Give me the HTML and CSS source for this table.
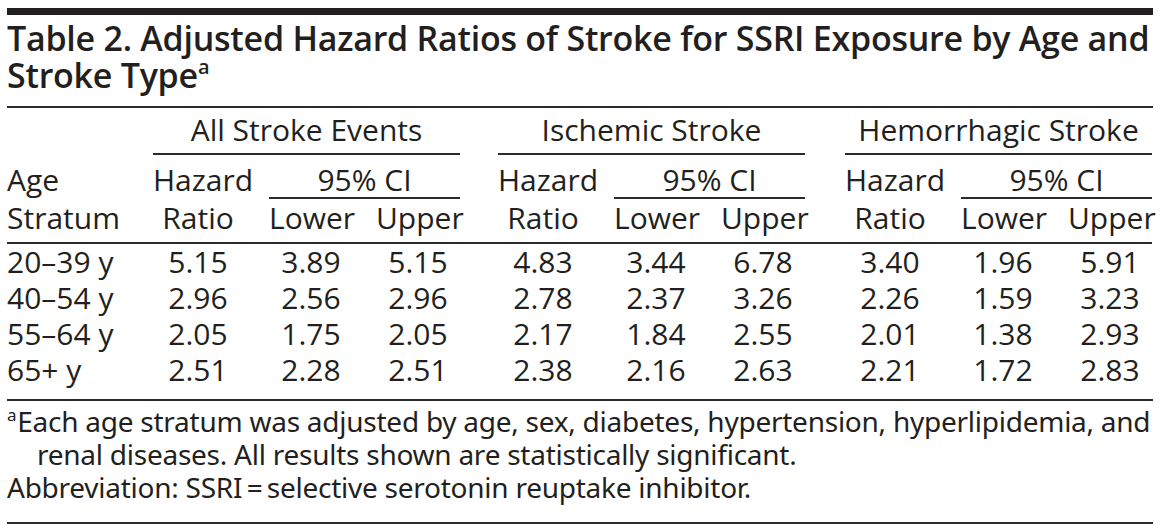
FILE: index.html
```html
<!DOCTYPE html>
<html lang="en">
<head>
<meta charset="utf-8">
<title>Table 2</title>
<link rel="stylesheet" href="styles.css">
</head>
<body>
<div class="page">
  <div class="topbar"></div>
  <h1 class="title">Table 2. Adjusted Hazard Ratios of Stroke for SSRI Exposure by Age and<br>Stroke Type<sup>a</sup></h1>
  <div class="rule"></div>
  <div class="tbl">
    <div class="grp g1">All Stroke Events</div>
    <div class="grp g2">Ischemic Stroke</div>
    <div class="grp g3">Hemorrhagic Stroke</div>

    <div class="h2 c-age">Age</div>
    <div class="h2 c-hr1">Hazard</div>
    <div class="h2 ci ci1">95% CI</div>
    <div class="h2 c-hr2">Hazard</div>
    <div class="h2 ci ci2">95% CI</div>
    <div class="h2 c-hr3">Hazard</div>
    <div class="h2 ci ci3">95% CI</div>

    <div class="h3 c-age">Stratum</div>
    <div class="h3 c-hr1">Ratio</div>
    <div class="h3 c-lo1">Lower</div>
    <div class="h3 c-up1">Upper</div>
    <div class="h3 c-hr2">Ratio</div>
    <div class="h3 c-lo2">Lower</div>
    <div class="h3 c-up2">Upper</div>
    <div class="h3 c-hr3">Ratio</div>
    <div class="h3 c-lo3">Lower</div>
    <div class="h3 c-up3">Upper</div>

    <div class="sep"></div>

    <div class="d r1 c-age">20–39 y</div>
    <div class="d r1 c-hr1">5.15</div><div class="d r1 c-lo1">3.89</div><div class="d r1 c-up1">5.15</div>
    <div class="d r1 c-hr2">4.83</div><div class="d r1 c-lo2">3.44</div><div class="d r1 c-up2">6.78</div>
    <div class="d r1 c-hr3">3.40</div><div class="d r1 c-lo3">1.96</div><div class="d r1 c-up3">5.91</div>

    <div class="d r2 c-age">40–54 y</div>
    <div class="d r2 c-hr1">2.96</div><div class="d r2 c-lo1">2.56</div><div class="d r2 c-up1">2.96</div>
    <div class="d r2 c-hr2">2.78</div><div class="d r2 c-lo2">2.37</div><div class="d r2 c-up2">3.26</div>
    <div class="d r2 c-hr3">2.26</div><div class="d r2 c-lo3">1.59</div><div class="d r2 c-up3">3.23</div>

    <div class="d r3 c-age">55–64 y</div>
    <div class="d r3 c-hr1">2.05</div><div class="d r3 c-lo1">1.75</div><div class="d r3 c-up1">2.05</div>
    <div class="d r3 c-hr2">2.17</div><div class="d r3 c-lo2">1.84</div><div class="d r3 c-up2">2.55</div>
    <div class="d r3 c-hr3">2.01</div><div class="d r3 c-lo3">1.38</div><div class="d r3 c-up3">2.93</div>

    <div class="d r4 c-age">65+ y</div>
    <div class="d r4 c-hr1">2.51</div><div class="d r4 c-lo1">2.28</div><div class="d r4 c-up1">2.51</div>
    <div class="d r4 c-hr2">2.38</div><div class="d r4 c-lo2">2.16</div><div class="d r4 c-up2">2.63</div>
    <div class="d r4 c-hr3">2.21</div><div class="d r4 c-lo3">1.72</div><div class="d r4 c-up3">2.83</div>
  </div>
  <div class="rule"></div>
  <div class="notes">
    <p class="note hang"><sup>a</sup>Each age stratum was adjusted by age, sex, diabetes, hypertension, hyperlipidemia, and<br>renal diseases. All results shown are statistically significant.</p>
    <p class="note">Abbreviation: SSRI&thinsp;=&thinsp;selective serotonin reuptake inhibitor.</p>
  </div>
  <div class="rule"></div>
</div>
</body>
</html>
```

FILE: styles.css
```css
html, body {
  margin: 0;
  padding: 0;
  background: #ffffff;
}

.page {
  width: 1146px;
  margin: 0 7px;
  color: #231f20;
  font-family: "Open Sans", "Noto Sans", sans-serif;
}

.topbar {
  margin-top: 8px;
  height: 7px;
  background: #231f20;
}

.title {
  margin: 5px 0 12px 0;
  font-size: 34px;
  line-height: 37px;
  font-weight: 600;
  letter-spacing: -0.25px;
  white-space: nowrap;
}

.title sup {
  font-size: 20px;
  vertical-align: 14px;
  line-height: 0;
}

.rule {
  height: 2px;
  background: #2b2b2b;
}

.tbl {
  display: grid;
  grid-template-columns: 146px 90px 26px 84px 23px 84px 38px 90px 26px 84px 23px 84px 40px 90px 26px 84px 23px 84px;
  font-size: 30px;
}

.tbl > div {
  white-space: nowrap;
  text-align: center;
}

.grp {
  grid-row: 1;
  line-height: 34px;
  padding: 5px 0 6px 0;
  border-bottom: 2px solid #2b2b2b;
}
.g1 { grid-column: 2 / 7; }
.g2 { grid-column: 8 / 13; }
.g3 { grid-column: 14 / 19; }

.h2 {
  grid-row: 2;
  line-height: 34px;
  padding-top: 8px;
}
.ci {
  border-bottom: 2px solid #2b2b2b;
}
.ci1 { grid-column: 4 / 7; }
.ci2 { grid-column: 10 / 13; }
.ci3 { grid-column: 16 / 19; }

.h3 {
  grid-row: 3;
  line-height: 34px;
  padding: 2px 0 7px 0;
}

.sep {
  grid-row: 4;
  grid-column: 1 / -1;
  height: 2px;
  background: #2b2b2b;
}

.d {
  line-height: 36px;
}
.r1 { grid-row: 5; }
.r2 { grid-row: 6; }
.r3 { grid-row: 7; }
.r4 { grid-row: 8; padding-bottom: 11px; }

.tbl > .c-age { grid-column: 1; text-align: left; }
.c-hr1 { grid-column: 2; }
.c-lo1 { grid-column: 4; }
.c-up1 { grid-column: 6; }
.c-hr2 { grid-column: 8; }
.c-lo2 { grid-column: 10; }
.c-up2 { grid-column: 12; }
.c-hr3 { grid-column: 14; }
.c-lo3 { grid-column: 16; }
.c-up3 { grid-column: 18; }

.notes {
  padding: 4px 0 18px 0;
  font-family: "Noto Sans", "Open Sans", sans-serif;
  font-size: 28px;
  line-height: 33px;
  letter-spacing: -0.25px;
}

.note {
  margin: 0;
  white-space: nowrap;
}

.note.hang {
  padding-left: 30px;
  text-indent: -30px;
}

.note sup {
  font-size: 17px;
  line-height: 0;
  vertical-align: 11px;
  margin-right: 1px;
}
```
